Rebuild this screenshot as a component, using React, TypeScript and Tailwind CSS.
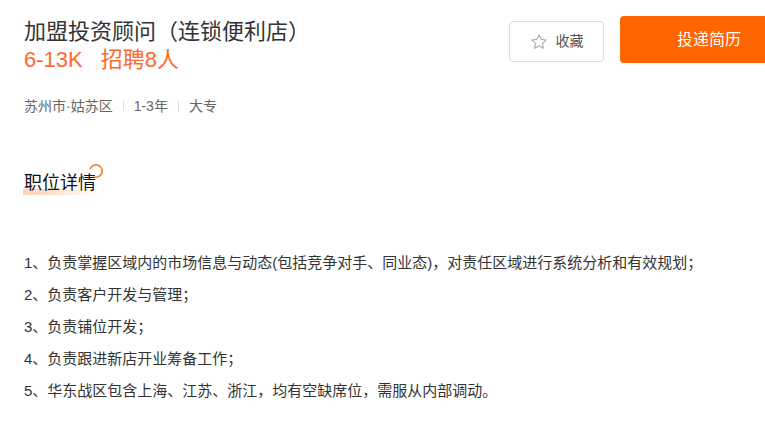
import React from "react";

const font = { fontFamily: '"Liberation Sans", "Noto Sans CJK SC", sans-serif' };

const items = [
  "1、负责掌握区域内的市场信息与动态(包括竞争对手、同业态)，对责任区域进行系统分析和有效规划；",
  "2、负责客户开发与管理；",
  "3、负责铺位开发；",
  "4、负责跟进新店开业筹备工作；",
  "5、华东战区包含上海、江苏、浙江，均有空缺席位，需服从内部调动。",
];

export default function App() {
  return (
    <div className="w-[765px] h-[425px] overflow-hidden bg-white" style={font}>
      <div className="w-[798px] pl-6">
        <div className="flex justify-between">
          <div className="pt-[18px]">
            <div className="text-[22px] leading-[28px] text-[#333]">加盟投资顾问（连锁便利店）</div>
            <div className="text-[22px] leading-[28px] text-[#fd6a2c] flex">
              <span>6-13K</span>
              <span className="ml-[18px]">招聘8人</span>
            </div>
            <div className="mt-[22px] flex items-center text-[14px] leading-[20px] text-[#666]">
              <span>苏州市·姑苏区</span>
              <span className="mx-[10px] h-[10px] w-px bg-[#ddd]" />
              <span>1-3年</span>
              <span className="mx-[10px] h-[10px] w-px bg-[#ddd]" />
              <span>大专</span>
            </div>
          </div>
          <div className="flex items-start gap-4">
            <button className="mt-[21px] flex h-[41px] w-[95px] items-center justify-center gap-[8px] rounded-[4px] border border-[#dcdcdc] bg-white text-[14px] text-[#555]">
              <svg width="18" height="18" viewBox="0 0 24 24" fill="none" stroke="#aaa" strokeWidth="1.5" strokeLinejoin="round">
                <path d="M12 2.5l2.9 6 6.5.9-4.7 4.5 1.1 6.5L12 17.3l-5.8 3.1 1.1-6.5-4.7-4.5 6.5-.9z" />
              </svg>
              <span>收藏</span>
            </button>
            <button className="mt-[16px] flex h-[47px] w-[178px] items-center justify-center rounded-[4px] bg-[#ff6600] text-[16px] text-white">
              投递简历
            </button>
          </div>
        </div>

        <div className="relative mt-[55px] inline-block">
          <div className="absolute bottom-0 left-[-1px] h-[6px] w-[76px] bg-linear-to-r from-[#ffd0b3] via-[#ffe6d6] to-white" />
          <svg className="absolute left-[64px] top-[-8px]" width="16" height="16" viewBox="0 0 16 16" fill="none">
            <path d="M2.3 5.5 A6.2 6.2 0 1 1 6.2 14" stroke="#ff7a2a" strokeWidth="1.6" strokeLinecap="round" />
          </svg>
          <div className="relative text-[18px] leading-[24px] text-[#111]">职位详情</div>
        </div>

        <div className="mt-[51px] text-[15px] leading-[32px] text-[#333]">
          {items.map((t) => (
            <div key={t}>{t}</div>
          ))}
        </div>
      </div>
    </div>
  );
}
